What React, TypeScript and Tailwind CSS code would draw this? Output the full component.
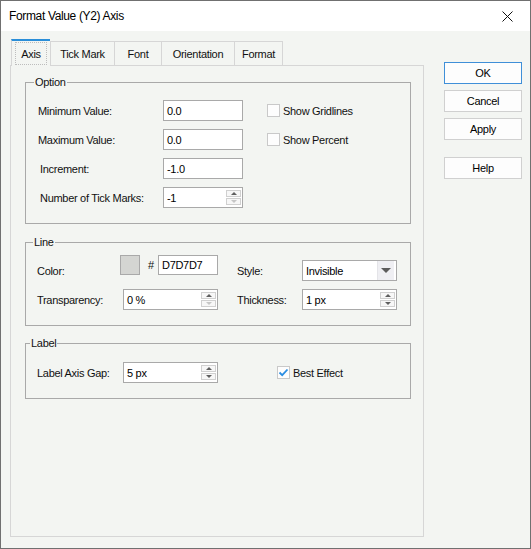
import React from 'react';

// Petites flèches des boutons de défilement
const Up = ({ dim = false }: { dim?: boolean }) => (
  <span
    className={`h-0 w-0 border-x-[3px] border-b-[3px] border-x-transparent ${
      dim ? 'border-b-[#c6c6c6]' : 'border-b-[#5f5f5f]'
    }`}
  />
);

const Down = ({ dim = false }: { dim?: boolean }) => (
  <span
    className={`h-0 w-0 border-x-[3px] border-t-[3px] border-x-transparent ${
      dim ? 'border-t-[#c6c6c6]' : 'border-t-[#5f5f5f]'
    }`}
  />
);

interface FieldProps {
  value: string;
  width: string;
  spin?: boolean;
  upDim?: boolean;
  downDim?: boolean;
}

const Field: React.FC<FieldProps> = ({ value, width, spin, upDim, downDim }) => (
  <div className={`flex h-[21px] ${width} items-center border border-[#a9a9a9] bg-white`}>
    <span className="flex-1 pl-[3px] text-black">{value}</span>
    {spin && (
      <div className="mr-px flex flex-col gap-px">
        <div className="flex h-[7px] w-[15px] items-center justify-center border border-[#d0d0d0] bg-[#f7f7f7]">
          <Up dim={upDim} />
        </div>
        <div className="flex h-[7px] w-[15px] items-center justify-center border border-[#d0d0d0] bg-[#f7f7f7]">
          <Down dim={downDim} />
        </div>
      </div>
    )}
  </div>
);

const Checkbox = ({ checked = false }: { checked?: boolean }) => (
  <span className="flex h-[13px] w-[13px] items-center justify-center border border-[#c9c9c9] bg-[#fdfdfd]">
    {checked && (
      <svg width="11" height="11" viewBox="0 0 11 11">
        <polyline points="1.5,5.5 4.2,8.2 9.5,2.5" fill="none" stroke="#2a8de2" strokeWidth="1.8" />
      </svg>
    )}
  </span>
);

const Group: React.FC<{ title: string; titleLeft: string; className: string; children: React.ReactNode }> = ({
  title,
  titleLeft,
  className,
  children,
}) => (
  <div className={`relative border border-[#a9a9a9] ${className}`}>
    <span className={`absolute -top-[8px] ${titleLeft} bg-[#f3f5f2] px-px leading-[14px]`}>{title}</span>
    {children}
  </div>
);

const tabs = ['Axis', 'Tick Mark', 'Font', 'Orientation', 'Format'];
const tabWidths = ['w-[39px]', 'w-[64px]', 'w-[47px]', 'w-[73px]', 'w-[49px]'];

const Button = ({ label, primary = false, className = '' }: { label: string; primary?: boolean; className?: string }) => (
  <button
    className={`flex h-[22px] w-[78px] items-center justify-center border bg-[#fdfdfd] text-black ${
      primary ? 'border-[#3f8fd8]' : 'border-[#d0d0d0]'
    } ${className}`}
  >
    {label}
  </button>
);

export default function App() {
  return (
    <div className="flex h-[549px] w-[531px] flex-col border border-[#707070] bg-[#f3f5f2] font-['Liberation_Sans',Arial,sans-serif] text-[11px] leading-[14px] tracking-[-0.3px] text-[#111]">
      {/* Barre de titre */}
      <div className="flex h-[30px] shrink-0 items-center justify-between bg-white pl-[8px] pr-[17px]">
        <span className="text-[12px] tracking-[-0.35px] text-black">Format Value (Y2) Axis</span>
        <svg width="11" height="11" viewBox="0 0 11 11">
          <path d="M0.5 0.5 L10.5 10.5 M10.5 0.5 L0.5 10.5" stroke="#111" strokeWidth="1" />
        </svg>
      </div>

      <div className="flex flex-1 items-start pl-[9px]">
        {/* Onglets + panneau */}
        <div className="flex w-[414px] flex-col pt-[8px]">
          <div className="flex h-[26px] items-end pl-px">
            {tabs.map((t, i) =>
              i === 0 ? (
                <div
                  key={t}
                  className={`relative z-10 -mb-px flex h-[27px] ${tabWidths[i]} border-l border-t-2 border-l-[#d6d6d6] border-t-[#2a8ed8] bg-[#f3f5f2] px-[3px] pb-[1px] pt-px`}
                >
                  <span className="flex flex-1 items-center justify-center border border-dotted border-[#bdbdbd]">
                    {t}
                  </span>
                </div>
              ) : (
                <div
                  key={t}
                  className={`flex h-[24px] ${tabWidths[i]} items-center justify-center border-l border-t border-[#d6d6d6] ${
                    i === tabs.length - 1 ? 'border-r' : ''
                  }`}
                >
                  {t}
                </div>
              )
            )}
          </div>

          <div className="flex h-[472px] flex-col border border-[#d6d6d6] pl-[14px] pr-[12px] pt-[16px]">
            <Group title="Option" titleLeft="left-[8px]" className="pb-[15px] pt-[17px]">
              <div className="flex flex-col gap-[8px]">
                <div className="flex h-[21px] items-center">
                  <span className="w-[137px] pl-[12px]">Minimum Value:</span>
                  <Field value="0.0" width="w-[80px]" />
                  <span className="ml-[24px]">
                    <Checkbox />
                  </span>
                  <span className="ml-[3px]">Show Gridlines</span>
                </div>
                <div className="flex h-[21px] items-center">
                  <span className="w-[137px] pl-[12px]">Maximum Value:</span>
                  <Field value="0.0" width="w-[80px]" />
                  <span className="ml-[24px]">
                    <Checkbox />
                  </span>
                  <span className="ml-[3px]">Show Percent</span>
                </div>
                <div className="flex h-[21px] items-center">
                  <span className="w-[137px] pl-[14px]">Increment:</span>
                  <Field value="-1.0" width="w-[80px]" />
                </div>
                <div className="flex h-[21px] items-center">
                  <span className="w-[137px] pl-[14px]">Number of Tick Marks:</span>
                  <Field value="-1" width="w-[80px]" spin downDim />
                </div>
              </div>
            </Group>

            <Group title="Line" titleLeft="left-[7px]" className="mt-[18px] pb-[15px] pt-[12px]">
              <div className="flex flex-col gap-[8px]">
                <div className="flex h-[26px] items-start">
                  <span className="mt-[5px] flex h-[21px] w-[94px] items-center pl-[11px]">Color:</span>
                  <span className="h-[20px] w-[20px] border border-[#a9a9a9] bg-[#d4d5d2]" />
                  <span className="ml-[8px] flex h-[20px] w-[10px] items-center">#</span>
                  <div className="flex h-[20px] w-[60px] items-center border border-[#a9a9a9] bg-white pl-[3px] text-black">
                    D7D7D7
                  </div>
                  <span className="ml-[19px] mt-[5px] flex h-[21px] w-[65px] items-center">Style:</span>
                  <div className="mt-[5px] flex h-[21px] w-[95px] items-center border border-[#a9a9a9] bg-white">
                    <span className="flex-1 pl-[3px] text-black">Invisible</span>
                    <span className="mr-[2px] flex h-[19px] w-[17px] items-center justify-center border-l border-[#e4e4e8] bg-[#efeff3]">
                      <span className="h-0 w-0 border-x-[5px] border-t-[5px] border-x-transparent border-t-[#5c5c5c]" />
                    </span>
                  </div>
                </div>
                <div className="flex h-[21px] items-center">
                  <span className="w-[97px] pl-[11px]">Transparency:</span>
                  <Field value="0 %" width="w-[95px]" spin downDim />
                  <span className="ml-[19px] w-[65px]">Thickness:</span>
                  <Field value="1 px" width="w-[95px]" spin />
                </div>
              </div>
            </Group>

            <Group title="Label" titleLeft="left-[4px]" className="mt-[17px] pb-[15px] pt-[18px]">
              <div className="flex h-[21px] items-center">
                <span className="w-[97px] pl-[11px]">Label Axis Gap:</span>
                <Field value="5 px" width="w-[95px]" spin />
                <span className="ml-[59px]">
                  <Checkbox checked />
                </span>
                <span className="ml-[3px]">Best Effect</span>
              </div>
            </Group>
          </div>
        </div>

        {/* Boutons */}
        <div className="ml-[20px] flex flex-col gap-[6px] pt-[31px]">
          <Button label="OK" primary />
          <Button label="Cancel" />
          <Button label="Apply" />
          <Button label="Help" className="mt-[11px]" />
        </div>
      </div>
    </div>
  );
}
